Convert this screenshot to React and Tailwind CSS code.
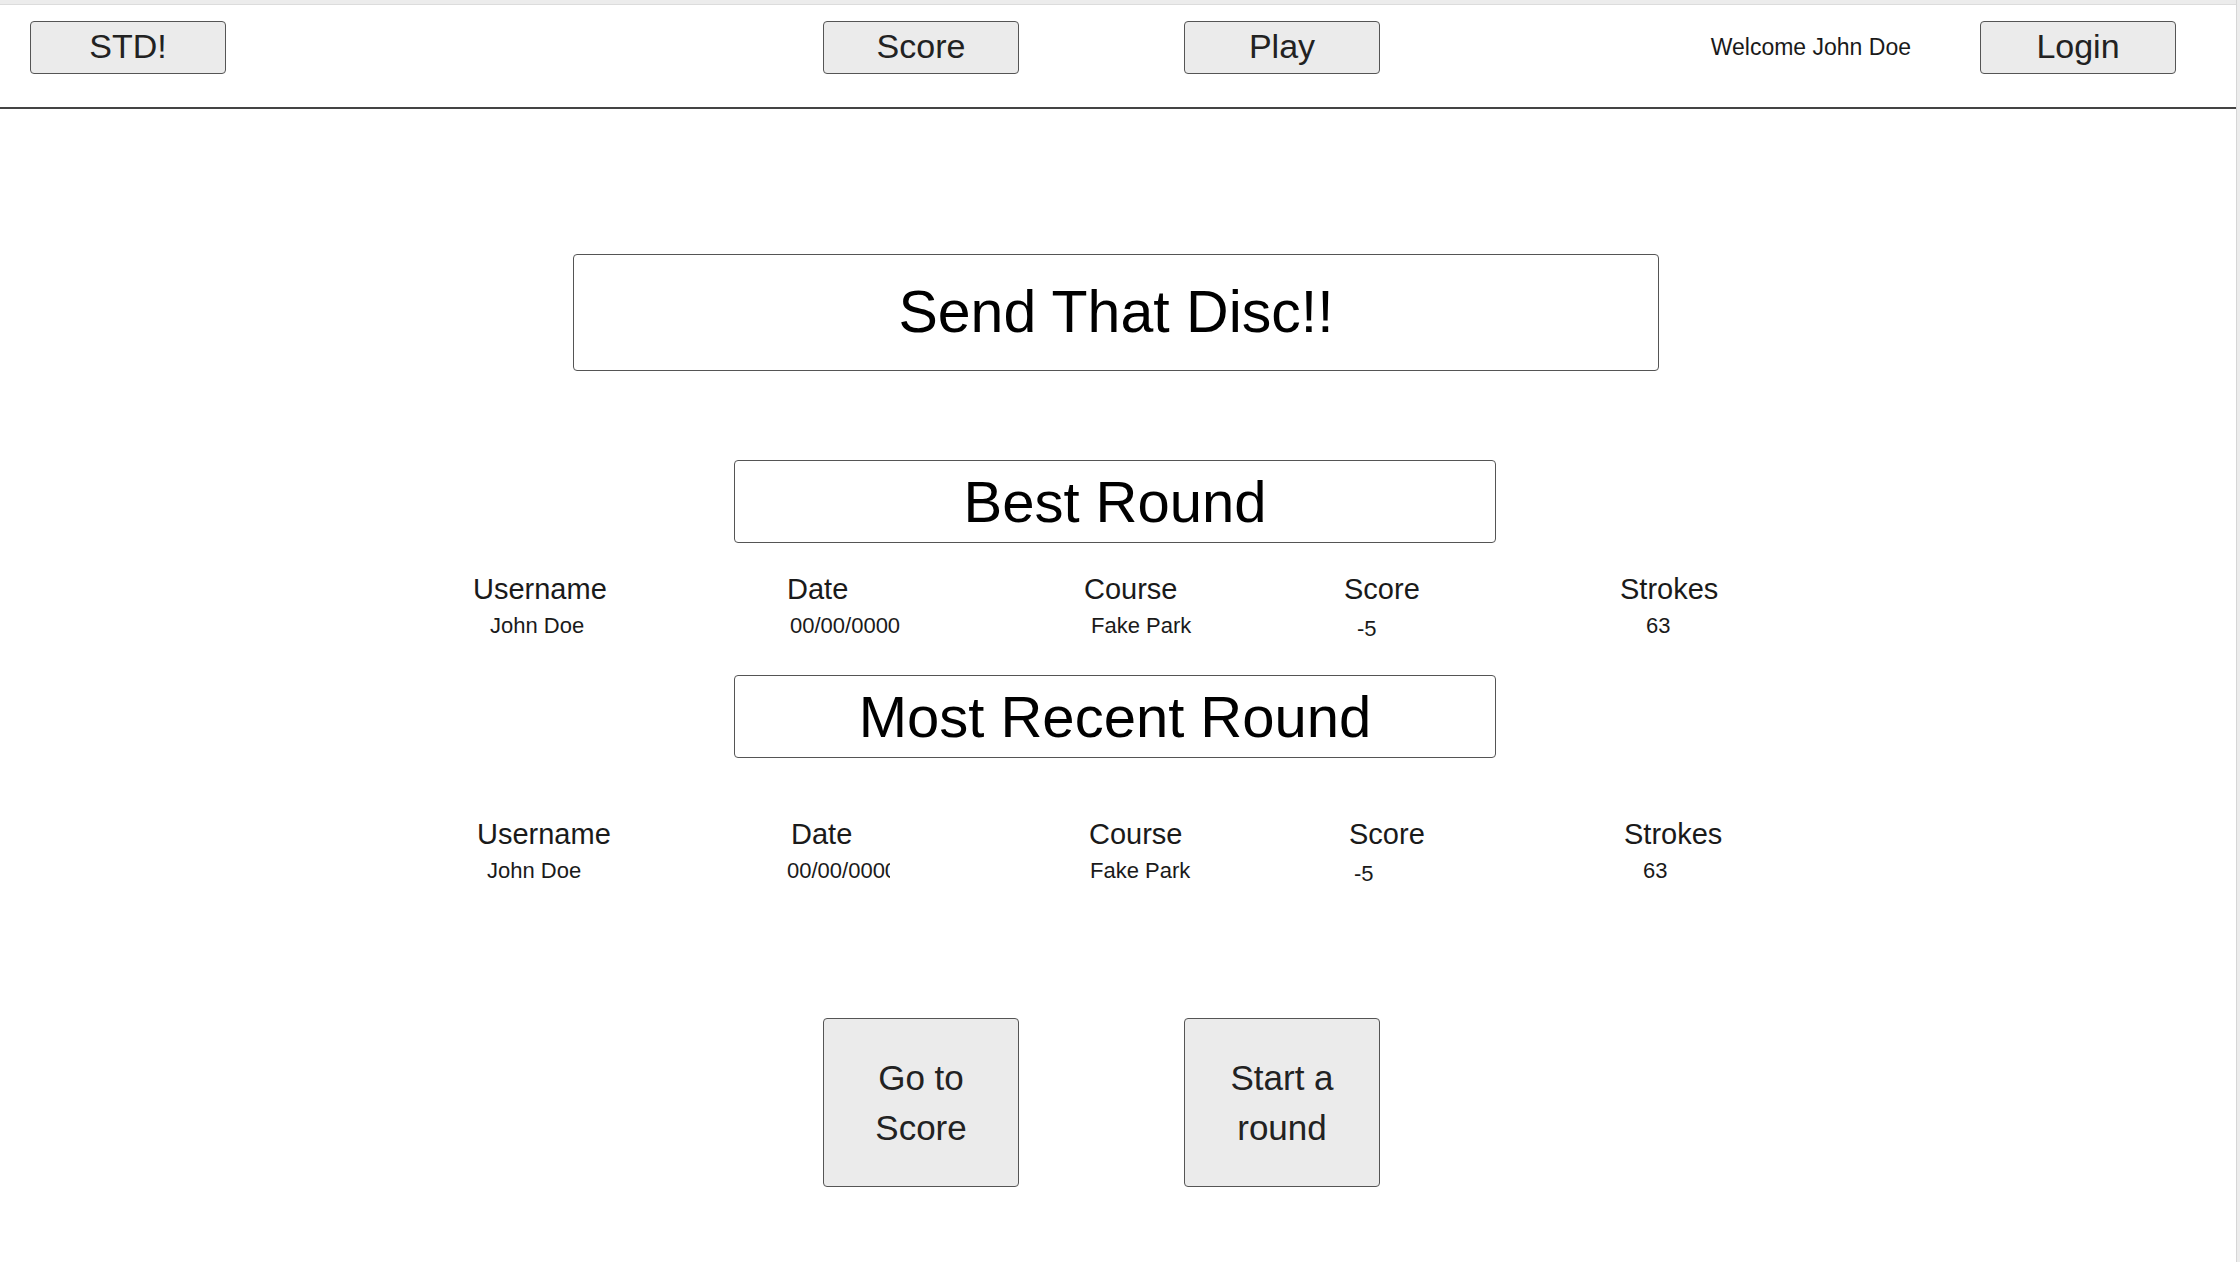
const font = { fontFamily: '"Liberation Sans", Arial, Helvetica, sans-serif' };

const navButton =
  'h-[53px] w-[196px] rounded-[4px] border-[1.5px] border-[#555] bg-[#ebebeb] pb-[4px] text-[34px] leading-none text-[#222]';

const bestRound = [
  { label: 'Username', value: 'John Doe', col: 'w-[314px]', pad: 'pl-[17px]' },
  { label: 'Date', value: '00/00/0000', col: 'w-[297px]', pad: 'pl-[3px]' },
  { label: 'Course', value: 'Fake Park', col: 'w-[260px]', pad: 'pl-[7px]' },
  { label: 'Score', value: '-5', col: 'w-[276px]', pad: 'pl-[13px] pt-[3px]' },
  { label: 'Strokes', value: '63', col: 'w-[160px]', pad: 'pl-[26px] -mt-[2px]' },
];

const recentRound = [
  { label: 'Username', value: 'John Doe', col: 'w-[314px]', pad: 'pl-[10px]' },
  { label: 'Date', value: '00/00/0000', col: 'w-[298px]', pad: '-ml-[4px] w-[103px] overflow-hidden whitespace-nowrap' },
  { label: 'Course', value: 'Fake Park', col: 'w-[260px]', pad: 'pl-[1px]' },
  { label: 'Score', value: '-5', col: 'w-[275px]', pad: 'pl-[5px] pt-[3px]' },
  { label: 'Strokes', value: '63', col: 'w-[160px]', pad: 'pl-[19px] -mt-[2px]' },
];

const RoundTable = ({ rows, offset }) => (
  <div className={`flex ${offset}`}>
    {rows.map((row) => (
      <div key={row.label} className={row.col}>
        <div className="text-[29px] leading-[34px] text-[#1a1a1a]">{row.label}</div>
        <div className={`mt-[7px] text-[22px] leading-[25px] text-[#1a1a1a] ${row.pad}`}>{row.value}</div>
      </div>
    ))}
  </div>
);

const TitleBox = ({ children, className }) => (
  <div
    className={`flex items-center justify-center rounded-[4px] border border-[#555] bg-white text-black leading-none ${className}`}
  >
    {children}
  </div>
);

const App = () => {
  return (
    <div className="flex min-h-[1262px] w-full bg-white" style={font}>
      <div className="flex-1">
        <div className="h-[5px] border-b border-[#dcdcdc] bg-[#ececec]" />

        <nav className="flex h-[104px] items-start border-b-2 border-[#444] pt-[16px] pl-[30px] pr-[60px]">
          <button className={navButton}>STD!</button>
          <button className={`${navButton} ml-[597px]`}>Score</button>
          <button className={`${navButton} ml-[165px]`}>Play</button>
          <div className="ml-auto mr-[69px] flex h-[53px] items-center text-[23px] text-[#1a1a1a]">
            Welcome John Doe
          </div>
          <button className={navButton}>Login</button>
        </nav>

        <main className="pb-[76px]">
          <TitleBox className="ml-[573px] mt-[145px] h-[117px] w-[1086px] text-[59px]">Send That Disc!!</TitleBox>

          <TitleBox className="ml-[734px] mt-[89px] h-[83px] w-[762px] text-[58px]">Best Round</TitleBox>
          <div className="mt-[29px]">
            <RoundTable rows={bestRound} offset="ml-[473px]" />
          </div>

          <TitleBox className="ml-[734px] mt-[34px] h-[83px] w-[762px] text-[58px]">Most Recent Round</TitleBox>
          <div className="mt-[59px]">
            <RoundTable rows={recentRound} offset="ml-[477px]" />
          </div>

          <div className="mt-[132px] flex gap-[165px] pl-[823px]">
            <button className="flex h-[169px] w-[196px] flex-col items-center justify-center rounded-[4px] border-[1.5px] border-[#555] bg-[#ebebeb] text-[35px] leading-[50px] text-[#222]">
              <span>Go to</span>
              <span>Score</span>
            </button>
            <button className="flex h-[169px] w-[196px] flex-col items-center justify-center rounded-[4px] border-[1.5px] border-[#555] bg-[#ebebeb] text-[35px] leading-[50px] text-[#222]">
              <span>Start a</span>
              <span>round</span>
            </button>
          </div>
        </main>
      </div>
      <div className="w-[4px] border-l border-[#d6d6d6] bg-[#ececec]" />
    </div>
  );
};

export default App;
